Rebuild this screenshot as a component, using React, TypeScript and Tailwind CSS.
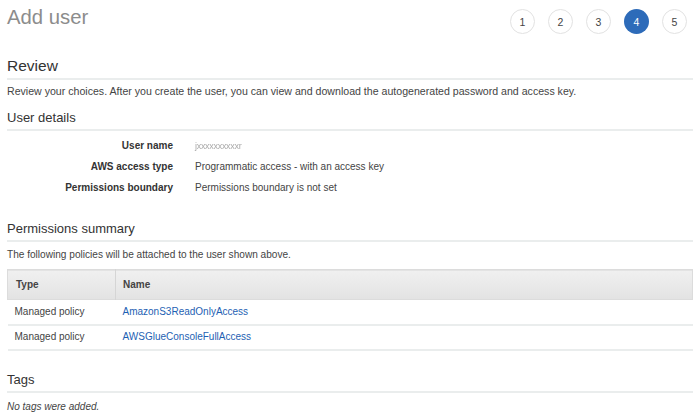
import { useState } from "react";

const steps = [1, 2, 3, 4, 5];

const details = [
  { label: "User name", value: "jxxxxxxxxxxr", blurred: true },
  { label: "AWS access type", value: "Programmatic access - with an access key" },
  { label: "Permissions boundary", value: "Permissions boundary is not set" },
];

const policies = [
  { type: "Managed policy", name: "AmazonS3ReadOnlyAccess" },
  { type: "Managed policy", name: "AWSGlueConsoleFullAccess" },
];

function SectionTitle({ title, big }: { title: string; big?: boolean }) {
  return (
    <h2
      className={`border-b-2 border-[#eaeded] pb-[2px] text-[#333] ${
        big ? "text-[15.5px] leading-[20px]" : "text-[13px] leading-[18px]"
      }`}
    >
      {title}
    </h2>
  );
}

function App() {
  const [current] = useState(4);

  return (
    <div className="w-[700px] h-[418px] overflow-hidden bg-white px-[7px] font-['Liberation_Sans',Arial,sans-serif] text-[#333] leading-[16px]">
      <div className="flex h-[34px] items-start justify-between pt-[4px] pr-[6px]">
        <h1 className="text-[20.3px] text-[#8c8c8c] leading-[26px]">Add user</h1>
        <div className="flex gap-[13px] pt-[5px]">
          {steps.map((s) => (
            <div
              key={s}
              className={`flex h-[25px] w-[25px] items-center justify-center rounded-full text-[10.5px] ${
                s === current
                  ? "bg-[#2d6bb9] text-white"
                  : "border border-[#e2e2e2] text-[#444]"
              }`}
            >
              {s}
            </div>
          ))}
        </div>
      </div>

      <div className="mt-[22px]">
        <SectionTitle title="Review" big />
        <p className="mt-[4px] text-[10.6px] leading-[14px] text-[#444]">
          Review your choices. After you create the user, you can view and download the autogenerated password and access key.
        </p>
      </div>

      <div className="mt-[11px]">
        <SectionTitle title="User details" />
        <div className="mt-[7px] flex flex-col gap-[5px] text-[10px]">
          {details.map((d) => (
            <div key={d.label} className="flex leading-[16px]">
              <div className="w-[166px] text-right font-bold text-[#333]">{d.label}</div>
              <div className="ml-[22px] text-[#444]">
                {d.blurred ? (
                  <span className="text-[#aaa] blur-[0.6px] text-[9px] tracking-[-0.3px]">{d.value}</span>
                ) : (
                  d.value
                )}
              </div>
            </div>
          ))}
        </div>
      </div>

      <div className="mt-[24px]">
        <SectionTitle title="Permissions summary" />
        <p className="mt-[6px] text-[10.1px] leading-[14px] text-[#444]">
          The following policies will be attached to the user shown above.
        </p>
        <table className="mt-[7px] w-[686px] border-collapse text-[10px]">
          <thead>
            <tr className="h-[30px] bg-gradient-to-b from-[#f0f0f0] to-[#e3e3e3] border border-[#dcdcdc]">
              <th className="w-[108px] pl-[8px] text-left font-bold text-[#444] border-r border-[#d5d5d5]">Type</th>
              <th className="pl-[7px] text-left font-bold text-[#444]">Name</th>
            </tr>
          </thead>
          <tbody>
            {policies.map((p) => (
              <tr key={p.name} className="h-[25px] border-b-2 border-[#eaeded]">
                <td className="pl-[7px] text-[#444]">{p.type}</td>
                <td className="pl-[7px] text-[#1e5fb3]">{p.name}</td>
              </tr>
            ))}
          </tbody>
        </table>
      </div>

      <div className="mt-[20px]">
        <SectionTitle title="Tags" />
        <p className="mt-[7px] text-[10px] leading-[14px] italic text-[#444]">No tags were added.</p>
      </div>
    </div>
  );
}

export default App;
